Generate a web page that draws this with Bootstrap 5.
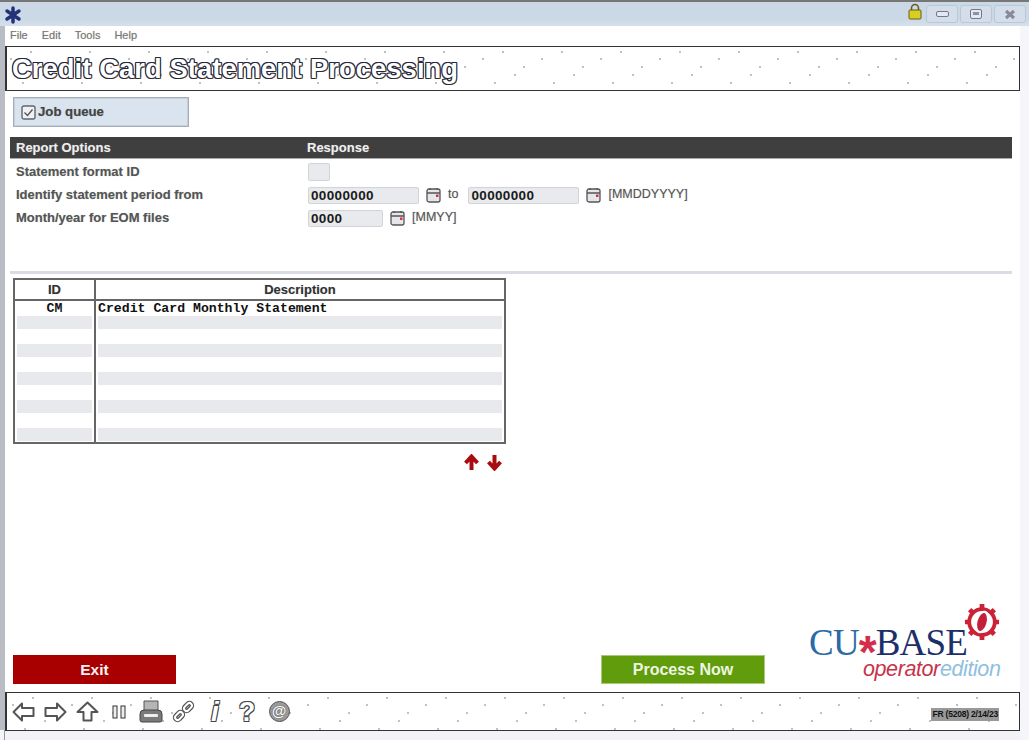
<!DOCTYPE html>
<html lang="en">
<head>
<meta charset="utf-8">
<title>Credit Card Statement Processing</title>
<link href="https://cdn.jsdelivr.net/npm/bootstrap@5.3.0/dist/css/bootstrap.min.css" rel="stylesheet">
<style>
html,body{margin:0;height:740px;overflow:hidden;background:#fff;font-family:"Liberation Sans",Arial,sans-serif}
.app-window{width:1029px;height:740px;border-top:2px solid #777;background:#f4f6f9}
.app-titlebar{height:24px;background:linear-gradient(#cbd9e7 0,#cbd9e7 70%,#d5e0ea 100%);padding:0 0 0 4px}
.win-btn{width:32px;height:18px;border:1px solid #b9c7d8;border-radius:3px;background:#d3deea;margin-right:2px}
.win-btns{margin:3px 1px 0 0}
.lock-ic{margin:-2px 4px 0 0}
.app-body{background:#fff;margin-left:4px;margin-right:9px;border-left:1px solid #999;height:714px}
.side-rail{width:5px;height:704px;background:#b9bcc2;position:absolute;left:0;top:24px}
.app-menu{height:20px;padding:1px 0 0 5px;gap:14px;font-size:11px;color:#777;background:#fff}
.app-menu a{color:#777;text-decoration:none;text-shadow:0 0 1px rgba(0,0,0,.25)}
.head-box{height:45px;margin-left:0;border:1px solid #333;border-left-width:2px;background:#fff;padding:0 0 0 5px}
.head-text{font-size:27.3px;font-weight:700;color:#fff;line-height:1;letter-spacing:.1px;text-shadow:-1px -1px 0 #23283c,1px -1px 0 #23283c,-1px 1px 0 #23283c,1px 1px 0 #5a4420,0 -1px 0 #23283c,0 1px 0 #23283c,-1px 0 0 #23283c,1px 0 0 #23283c}
.job-box{width:176px;height:30px;margin:6px 0 0 8px;background:#dae4ef;border:1px solid #a5adb8;box-shadow:inset 0 0 0 1px #c5cfda;padding-left:7px;gap:2px;font-size:13.2px;font-weight:700;color:#444;text-shadow:0 0 1px rgba(0,0,0,.3)}
.opts-head{height:22px;margin:10px 8px 0 5px;background:#3f3f3f;color:#eee;font-size:13px;font-weight:700;padding-left:6px;border-bottom:1px solid #aaa;text-shadow:0 0 1px rgba(255,255,255,.3)}
.lbl-col{width:291px;flex:none}
.opts-body{margin:0 8px 0 5px;padding-top:1px;font-size:13px;font-weight:700;color:#555;text-shadow:0 0 1px rgba(0,0,0,.25)}
.opts-body .lbl-col{width:292px}
.opt-row{height:23px;padding-left:6px}
.fld{height:17px;margin-top:2px;background:#e8eaed;border:1px solid #d0d3d7;border-radius:2px;padding:0 2px;font-size:13.5px;font-weight:700;color:#1a1a1a;line-height:15px;letter-spacing:.35px;text-shadow:none}
.fld-lg{width:111px}.fld-md{width:75px}.fld-sm{width:22px;height:18px;margin-top:0}
.cal-ic{margin:0 7px 0 7px}
.hint{font-weight:400;color:#555;font-size:12.5px}
.hint-to{margin-right:10px}
.sep-line{height:3px;margin:42px 8px 0 5px;background:#d9dce2}
.grid-wrap{margin:4px 0 0 8px;width:493px}
.list-tbl{width:493px;height:165px;border:2px solid #666;table-layout:fixed;margin:0;border-collapse:separate;border-spacing:0}
.list-tbl th{height:21px;padding:0;font-size:13px;font-weight:700;text-align:center;color:#333;border-bottom:2px solid #666;line-height:1;text-shadow:0 0 1px rgba(0,0,0,.25)}
.list-tbl td{height:14px;padding:0;font:700 13.2px/14px "Liberation Mono",monospace;color:#111;white-space:pre}
.list-tbl .first-row td{height:15px}
.list-tbl tr>*:first-child{width:81px;border-right:2px solid #666;text-align:center}
.list-tbl td:last-child{padding-left:2px}
.stripe-cell{display:block;height:13px;background:#e7e9ec;margin:0 2px 1px 2px}
.arrow-row{width:493px;height:28px;gap:6px;padding:10px 3px 0 0}
.foot-row{margin-top:auto}
.exit-btn,.go-btn{width:164px;height:29px;margin-bottom:8px;border:0;border-radius:0;font-weight:700;line-height:29px;padding:0;color:#f3f3f3}
.exit-btn{width:163px;background:#a80000;margin-left:8px;font-size:15.5px}
.go-btn{background:#609c0c;margin-left:425px;border:1px solid #a8c87a;line-height:27px;color:#eef5e2;font-size:16px}
.logo-box{width:200px;height:80px;margin-left:44px;position:relative;margin-bottom:11px}
.logo-main{font-family:"Liberation Serif",serif;font-size:37px;line-height:30px;letter-spacing:-.8px;color:#1d2f6b;white-space:nowrap;padding-top:27px}
.logo-cu{color:#2a6aa6}.logo-star{color:#d32f4a;font-family:"Liberation Sans",sans-serif;font-weight:700;font-size:46px;line-height:0;vertical-align:-13px;letter-spacing:-1px}
.logo-sub{font-size:21.5px;font-style:italic;line-height:21px;letter-spacing:-.4px;margin:1px 0 0 54px;white-space:nowrap}
.logo-op{color:#c8334a}.logo-ed{color:#8fbfe0}
.logo-gear{position:absolute;left:155px;top:2px}
.tool-box{height:39px;border:1px solid #333;border-left-width:2px;background:#fff;padding-left:0}
.tool-ic{width:32px;flex:none;text-align:center;line-height:1;display:flex;justify-content:center;align-items:center}
.tool-txt{font-size:8.5px;font-weight:700;color:#111;background:#999;padding:0 1px;margin:6px 20px 0 auto;white-space:nowrap;letter-spacing:-.2px}
.tool-glyph{font-size:28px;line-height:24px;font-weight:700;color:#fff;font-family:"Liberation Sans",sans-serif;text-shadow:-1px -1px 0 #444,1px -1px 0 #444,-1px 1px 0 #444,1px 1px 0 #444;font-style:italic}
.tool-q{font-style:normal;font-size:27px}
.tool-at{display:block;width:21px;height:21px;border-radius:50%;background:#999;border:1px solid #555;color:#fff;font:700 15px/18px "Liberation Sans",sans-serif;text-shadow:0 0 1px #222}
.bottom-strip{height:9px;background:#f1f3f6}
.noise{background-image:radial-gradient(circle at 6px 12px,#333 .5px,transparent .8px),radial-gradient(circle at 26px 5px,#333 .5px,transparent .8px),radial-gradient(circle at 47px 20px,#333 .5px,transparent .8px),radial-gradient(circle at 18px 36px,#333 .5px,transparent .8px),radial-gradient(circle at 38px 28px,#333 .5px,transparent .8px);background-size:59px 43px;background-position:470px 0;background-repeat:repeat-x}
.tool-noise{background-position:295px 0}
</style>
</head>
<body>
<div class="app-window position-relative">
  <div class="app-titlebar d-flex align-items-start">
    <svg width="20" height="20" viewBox="0 0 20 20" class="mt-1"><g stroke="#24327a" stroke-width="3.5" stroke-linecap="round"><path d="M9 2v14M3 5l12 8M15 5L3 13"/></g></svg>
    <div class="ms-auto d-flex win-btns">
      <svg class="lock-ic" width="14" height="17" viewBox="0 0 14 17"><path d="M3.5 8V5a3.5 3.5 0 0 1 7 0v3" fill="none" stroke="#6b5a20" stroke-width="1.6"/><rect x="1" y="7" width="12" height="9" rx="1" fill="#d8d020" stroke="#6b5a20"/></svg>
      <div class="win-btn d-flex align-items-center justify-content-center"><svg width="13" height="6"><rect x=".5" y=".5" width="12" height="5" rx="1.5" fill="#e3e9f0" stroke="#778"/></svg></div>
      <div class="win-btn d-flex align-items-center justify-content-center"><svg width="12" height="10"><rect x=".5" y=".5" width="11" height="9" rx="1.5" fill="#e3e9f0" stroke="#778"/><rect x="3" y="3" width="6" height="3" fill="#8896a8"/></svg></div>
      <div class="win-btn d-flex align-items-center justify-content-center"><svg width="12" height="11"><path d="M2 2l8 7M10 2L2 9" stroke="#889" stroke-width="3"/></svg></div>
    </div>
  </div>
  <div class="side-rail"></div>
  <div class="app-body d-flex flex-column">
    <nav class="app-menu d-flex"><a href="#">File</a><a href="#">Edit</a><a href="#">Tools</a><a href="#">Help</a></nav>
    <div class="head-box noise d-flex align-items-center"><span class="head-text">Credit Card Statement Processing</span></div>
    <div class="job-box d-flex align-items-center">
      <svg width="15" height="15" viewBox="0 0 15 15"><rect x="1" y="1" width="13" height="13" rx="2" fill="#eef1f5" stroke="#666" stroke-width="1.4"/><path d="M3.5 7.5l3 3 5-6" fill="none" stroke="#555" stroke-width="1.4"/></svg>
      <span>Job queue</span>
    </div>
    <div class="opts-head d-flex align-items-center"><div class="lbl-col">Report Options</div><div>Response</div></div>
    <div class="opts-body">
      <div class="opt-row d-flex align-items-center"><div class="lbl-col">Statement format ID</div><div class="fld fld-sm"></div></div>
      <div class="opt-row d-flex align-items-center"><div class="lbl-col">Identify statement period from</div>
        <div class="fld fld-lg">00000000</div>
        <svg class="cal-ic" width="15" height="16" viewBox="0 0 15 16"><rect x="1" y="2" width="13" height="13" rx="2" fill="#e4e6ea" stroke="#555" stroke-width="1.3"/><path d="M1 6h13" stroke="#555" stroke-width="1.5"/><path d="M4 1v2M11 1v2" stroke="#555" stroke-width="1.3"/><rect x="10" y="7.5" width="2.5" height="2.5" fill="#d33"/></svg>
        <span class="hint hint-to">to</span>
        <div class="fld fld-lg">00000000</div>
        <svg class="cal-ic" width="15" height="16" viewBox="0 0 15 16"><rect x="1" y="2" width="13" height="13" rx="2" fill="#e4e6ea" stroke="#555" stroke-width="1.3"/><path d="M1 6h13" stroke="#555" stroke-width="1.5"/><path d="M4 1v2M11 1v2" stroke="#555" stroke-width="1.3"/><rect x="10" y="7.5" width="2.5" height="2.5" fill="#d33"/></svg>
        <span class="hint">[MMDDYYYY]</span>
      </div>
      <div class="opt-row d-flex align-items-center"><div class="lbl-col">Month/year for EOM files</div>
        <div class="fld fld-md">0000</div>
        <svg class="cal-ic" width="15" height="16" viewBox="0 0 15 16"><rect x="1" y="2" width="13" height="13" rx="2" fill="#e4e6ea" stroke="#555" stroke-width="1.3"/><path d="M1 6h13" stroke="#555" stroke-width="1.5"/><path d="M4 1v2M11 1v2" stroke="#555" stroke-width="1.3"/><rect x="10" y="7.5" width="2.5" height="2.5" fill="#d33"/></svg>
        <span class="hint">[MMYY]</span>
      </div>
    </div>
    <div class="sep-line"></div>
    <div class="grid-wrap">
      <table class="list-tbl">
        <thead><tr><th>ID</th><th>Description</th></tr></thead>
        <tbody>
          <tr class="first-row"><td>CM</td><td>Credit Card Monthly Statement</td></tr>
          <tr><td><span class="stripe-cell"></span></td><td class="p-0"><span class="stripe-cell"></span></td></tr>
          <tr><td></td><td></td></tr>
          <tr><td><span class="stripe-cell"></span></td><td class="p-0"><span class="stripe-cell"></span></td></tr>
          <tr><td></td><td></td></tr>
          <tr><td><span class="stripe-cell"></span></td><td class="p-0"><span class="stripe-cell"></span></td></tr>
          <tr><td></td><td></td></tr>
          <tr><td><span class="stripe-cell"></span></td><td class="p-0"><span class="stripe-cell"></span></td></tr>
          <tr><td></td><td></td></tr>
          <tr><td><span class="stripe-cell"></span></td><td class="p-0"><span class="stripe-cell"></span></td></tr>
        </tbody>
      </table>
      <div class="arrow-row d-flex justify-content-end">
        <svg width="17" height="17" viewBox="0 0 17 17"><path d="M2.5 9l6-6.500 6 6.500M8.500 3v13" fill="none" stroke="#a80c10" stroke-width="4" stroke-linejoin="miter"/></svg>
        <svg width="17" height="17" viewBox="0 0 17 17"><path d="M2.500 8l6 6.500 6-6.500M8.500 14V1" fill="none" stroke="#a80c10" stroke-width="4" stroke-linejoin="miter"/></svg>
      </div>
    </div>
    <div class="foot-row d-flex align-items-end">
      <button type="button" class="btn exit-btn">Exit</button>
      <button type="button" class="btn go-btn">Process Now</button>
      <div class="logo-box">
        <svg class="logo-gear" width="36" height="38" viewBox="0 0 38 40"><circle cx="19" cy="20" r="13.500" fill="none" stroke="#cc2236" stroke-width="4"/><g stroke="#cc2236" stroke-width="5"><path d="M19 1v6M19 33v6M1 20h6M31 20h6M6 7l4 4M28 29l4 4M32 7l-4 4M10 29l-4 4"/></g><ellipse cx="19" cy="20" rx="6" ry="11" transform="rotate(15 19 20)" fill="#c41e3a" stroke="#fff" stroke-width="2.500"/></svg>
        <div class="logo-main"><span class="logo-cu">CU</span><span class="logo-star">*</span>BASE</div>
        <div class="logo-sub"><span class="logo-op">operator</span><span class="logo-ed">edition</span></div>
      </div>
    </div>
    <div class="tool-box noise tool-noise d-flex align-items-center">
      <div class="tool-ic"><svg width="23" height="20" viewBox="0 0 23 20"><path d="M10 1.500L1.500 10l8.500 8.500V14h11.500V6H10z" fill="#fff" stroke="#555" stroke-width="2" stroke-linejoin="round"/></svg></div>
      <div class="tool-ic"><svg width="23" height="20" viewBox="0 0 23 20"><path d="M13 1.500l8.500 8.500-8.500 8.500V14H1.500V6H13z" fill="#fff" stroke="#555" stroke-width="2" stroke-linejoin="round"/></svg></div>
      <div class="tool-ic"><svg width="23" height="21" viewBox="0 0 23 21"><path d="M11.500 1.500L1.500 11h6v8.500h8V11h6z" fill="#fff" stroke="#555" stroke-width="2" stroke-linejoin="round"/></svg></div>
      <div class="tool-ic"><svg width="14" height="14" viewBox="0 0 14 14"><rect x="1" y="1" width="4" height="12" fill="#eee" stroke="#333"/><rect x="9" y="1" width="4" height="12" fill="#eee" stroke="#333"/></svg></div>
      <div class="tool-ic"><svg width="24" height="23" viewBox="0 0 24 23"><path d="M5 1h14v11H5z" fill="#b5b5b5" stroke="#555"/><path d="M1 14q0-4 4-4h14q4 0 4 4v6q0 2-2 2H3q-2 0-2-2z" fill="#7a7a7a" stroke="#444"/><rect x="5" y="14" width="14" height="3" rx="1" fill="#eee"/></svg></div>
      <div class="tool-ic"><svg width="23" height="23" viewBox="0 0 23 23"><g fill="none" stroke="#555" stroke-width="4.500"><rect x="11.500" y="4.500" width="9" height="5" rx="2.500" transform="rotate(-45 16 7)"/><rect x="2.500" y="13.500" width="9" height="5" rx="2.500" transform="rotate(-45 7 16)"/></g><g fill="none" stroke="#fff" stroke-width="2"><rect x="11.500" y="4.500" width="9" height="5" rx="2.500" transform="rotate(-45 16 7)"/><rect x="2.500" y="13.500" width="9" height="5" rx="2.500" transform="rotate(-45 7 16)"/></g></svg></div>
      <div class="tool-ic"><span class="tool-glyph">i</span></div>
      <div class="tool-ic"><span class="tool-glyph tool-q">?</span></div>
      <div class="tool-ic"><span class="tool-at">@</span></div>
      <span class="tool-txt">FR (5208) 2/14/23</span>
    </div>
    <div class="bottom-strip"></div>
  </div>
</div>
</body>
</html>
